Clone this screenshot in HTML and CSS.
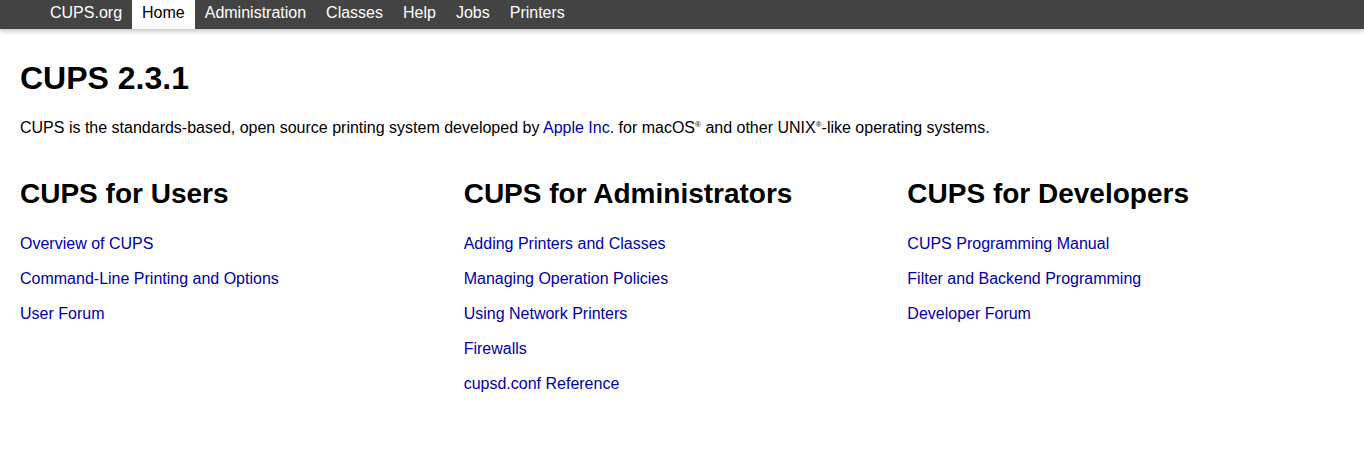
FILE: index.html
```html
<!DOCTYPE html>
<html lang="en">
<head>
<meta charset="utf-8">
<title>Home - CUPS 2.3.1</title>
<link rel="stylesheet" href="styles.css">
</head>
<body>
<header class="header">
  <ul class="nav">
    <li><a href="#">CUPS.org</a></li>
    <li><a class="active" href="#">Home</a></li>
    <li><a href="#">Administration</a></li>
    <li><a href="#">Classes</a></li>
    <li><a href="#">Help</a></li>
    <li><a href="#">Jobs</a></li>
    <li><a href="#">Printers</a></li>
  </ul>
</header>
<main class="content">
  <h1 class="title">CUPS 2.3.1</h1>
  <p class="intro">CUPS is the standards-based, open source printing system developed by <a href="#">Apple Inc.</a> for macOS<sup class="reg">®</sup> and other UNIX<sup class="reg">®</sup>-like operating systems.</p>
  <div class="row">
    <section class="col">
      <h2 class="col-title">CUPS for Users</h2>
      <ul class="links">
        <li><a href="#">Overview of CUPS</a></li>
        <li><a href="#">Command-Line Printing and Options</a></li>
        <li><a href="#">User Forum</a></li>
      </ul>
    </section>
    <section class="col">
      <h2 class="col-title">CUPS for Administrators</h2>
      <ul class="links">
        <li><a href="#">Adding Printers and Classes</a></li>
        <li><a href="#">Managing Operation Policies</a></li>
        <li><a href="#">Using Network Printers</a></li>
        <li><a href="#">Firewalls</a></li>
        <li><a href="#">cupsd.conf Reference</a></li>
      </ul>
    </section>
    <section class="col">
      <h2 class="col-title">CUPS for Developers</h2>
      <ul class="links">
        <li><a href="#">CUPS Programming Manual</a></li>
        <li><a href="#">Filter and Backend Programming</a></li>
        <li><a href="#">Developer Forum</a></li>
      </ul>
    </section>
  </div>
</main>
</body>
</html>
```

FILE: styles.css
```css
html, body {
  margin: 0;
  padding: 0;
  background: #fff;
  color: #000;
  font-family: "Liberation Sans", Arial, Helvetica, sans-serif;
  font-size: 16px;
  line-height: 1.4;
}

a {
  color: #0000aa;
  text-decoration: none;
}

.header {
  height: 29px;
  background: #434343;
  box-shadow: 0 2px 5px rgba(0, 0, 0, 0.25);
}

.nav {
  list-style: none;
  margin: 0 0 0 40px;
  padding: 0;
  display: flex;
}

.nav a {
  display: block;
  color: #fff;
  padding: 0 10px 3px;
  line-height: 26px;
}

.nav a.active {
  background: #fff;
  color: #000;
}

.content {
  padding: 0 20px;
}

.title {
  margin: 27px 0 0;
  font-size: 32px;
  line-height: 45px;
  font-weight: bold;
}

.intro {
  margin: 16px 0 0;
  line-height: 22.4px;
}

.reg {
  font-size: 8px;
  line-height: 0;
  vertical-align: 6px;
}

.row {
  display: grid;
  grid-template-columns: repeat(3, 1fr);
  column-gap: 7px;
  margin-top: 35px;
}

.col-title {
  margin: 0;
  font-size: 28px;
  line-height: 39px;
  font-weight: bold;
}

.links {
  list-style: none;
  margin: 13px 0 0;
  padding: 0;
}

.links li {
  line-height: 35px;
}
```
